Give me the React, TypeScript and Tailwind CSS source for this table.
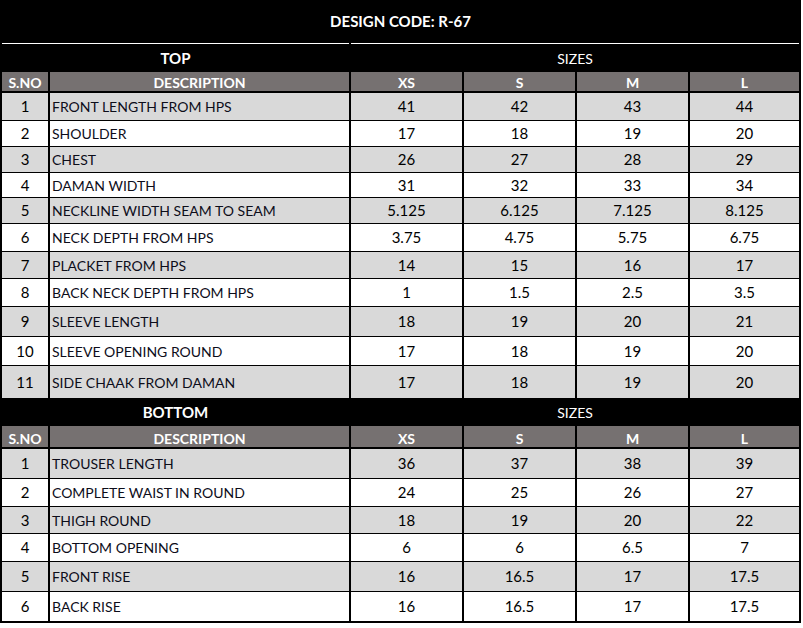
const topRows = [
  { no: 1, desc: "FRONT LENGTH FROM HPS", v: ["41", "42", "43", "44"], h: "h-[27px]" },
  { no: 2, desc: "SHOULDER", v: ["17", "18", "19", "20"], h: "h-[25px]" },
  { no: 3, desc: "CHEST", v: ["26", "27", "28", "29"], h: "h-[25px]" },
  { no: 4, desc: "DAMAN WIDTH", v: ["31", "32", "33", "34"], h: "h-[24px]" },
  { no: 5, desc: "NECKLINE WIDTH SEAM TO SEAM", v: ["5.125", "6.125", "7.125", "8.125"], h: "h-[25px]" },
  { no: 6, desc: "NECK DEPTH FROM HPS", v: ["3.75", "4.75", "5.75", "6.75"], h: "h-[27px]" },
  { no: 7, desc: "PLACKET FROM HPS", v: ["14", "15", "16", "17"], h: "h-[26px]" },
  { no: 8, desc: "BACK NECK DEPTH FROM HPS", v: ["1", "1.5", "2.5", "3.5"], h: "h-[27px]" },
  { no: 9, desc: "SLEEVE LENGTH", v: ["18", "19", "20", "21"], h: "h-[29px]" },
  { no: 10, desc: "SLEEVE OPENING ROUND", v: ["17", "18", "19", "20"], h: "h-[28px]" },
  { no: 11, desc: "SIDE CHAAK FROM DAMAN", v: ["17", "18", "19", "20"], h: "h-[32px]" },
];

const bottomRows = [
  { no: 1, desc: "TROUSER LENGTH", v: ["36", "37", "38", "39"], h: "h-[29px]" },
  { no: 2, desc: "COMPLETE WAIST IN ROUND", v: ["24", "25", "26", "27"], h: "h-[27px]" },
  { no: 3, desc: "THIGH ROUND", v: ["18", "19", "20", "22"], h: "h-[26px]" },
  { no: 4, desc: "BOTTOM OPENING", v: ["6", "6", "6.5", "7"], h: "h-[27px]" },
  { no: 5, desc: "FRONT RISE", v: ["16", "16.5", "17", "17.5"], h: "h-[29px]" },
  { no: 6, desc: "BACK RISE", v: ["16", "16.5", "17", "17.5"], h: "h-[29px]" },
];

const grid = "grid grid-cols-[46px_299px_111px_111px_111px_109px] gap-x-[2px]";

type Row = { no: number; desc: string; v: string[]; h: string };

const Section = ({ title, rows, headH }: { title: string; rows: Row[]; headH: string }) => (
  <>
    <div className={`${grid} h-[28px] items-center text-white text-[14px]`}>
      <div className="col-span-2 text-center font-bold text-[15px]">{title}</div>
      <div className="col-span-4 text-center">SIZES</div>
    </div>
    <div className={`${grid} ${headH} mb-[2px] text-white font-bold text-[14px]`}>
      {["S.NO", "DESCRIPTION", "XS", "S", "M", "L"].map((t) => (
        <div key={t} className="bg-[#767171] flex items-end justify-center leading-none pb-[1px]">
          {t}
        </div>
      ))}
    </div>
    <div className="flex flex-col gap-y-[1px]">
      {rows.map((r, i) => {
        const bg = i % 2 === 0 ? "bg-[#d9d9d9]" : "bg-white";
        return (
          <div key={r.no} className={`${grid} ${r.h} text-[15px] text-black`}>
            <div className={`${bg} flex items-center justify-center`}>{r.no}</div>
            <div className={`${bg} flex items-center pl-[2px] text-[14px] text-[#0d0d1a]`}>{r.desc}</div>
            {r.v.map((x, j) => (
              <div key={j} className={`${bg} flex items-center justify-center`}>
                {x}
              </div>
            ))}
          </div>
        );
      })}
    </div>
  </>
);

export default function App() {
  return (
    <div className="w-[803px] h-[628px] bg-white font-['Lato',sans-serif]">
      <div className="w-[801px] bg-black px-[2px] pb-[2px]">
        <div className="h-[43px] flex items-center justify-center text-white font-bold text-[15px]">
          DESIGN CODE: R-67
        </div>
        <div className={`${grid} h-[1px]`}>
          <div className="col-span-2 bg-white" />
          <div className="col-span-4 bg-white" />
        </div>
        <Section title="TOP" rows={topRows} headH="h-[19px]" />
        <Section title="BOTTOM" rows={bottomRows} headH="h-[21px]" />
      </div>
    </div>
  );
}
